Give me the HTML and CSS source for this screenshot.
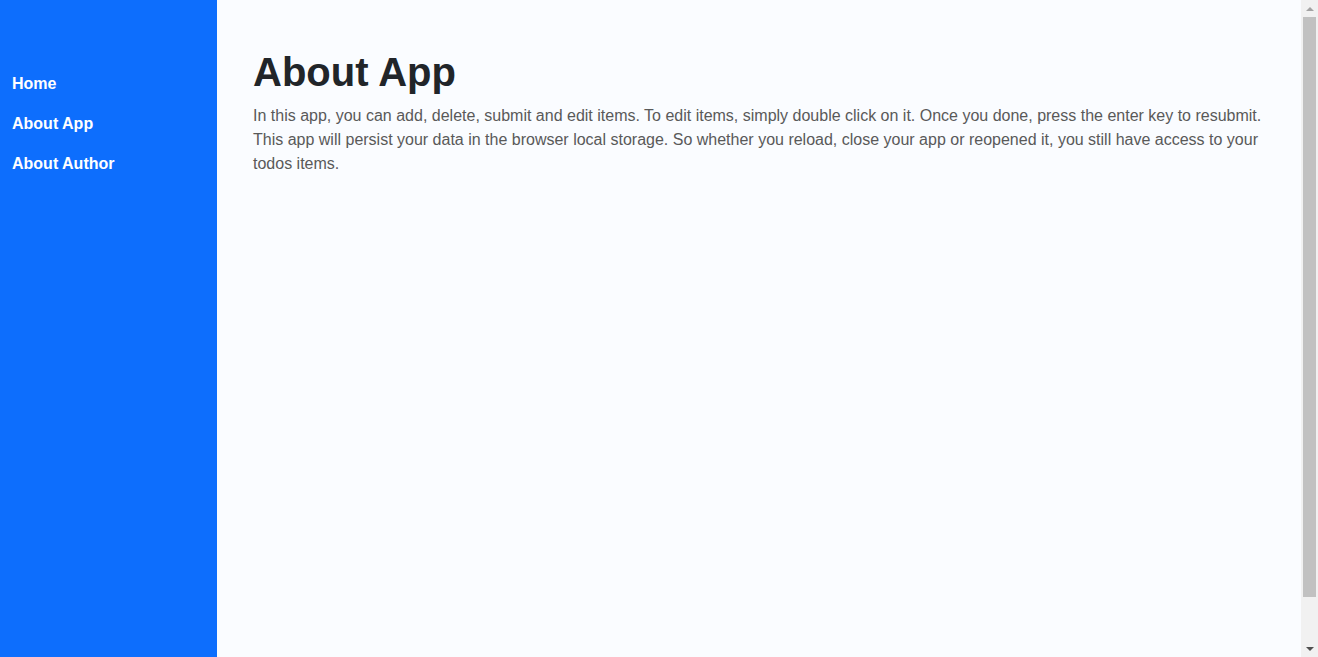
FILE: index.html
```html
<!DOCTYPE html>
<html lang="en">
<head>
<meta charset="utf-8">
<title>About App</title>
<link rel="stylesheet" href="styles.css">
</head>
<body>
<div class="layout">
  <nav class="sidebar">
    <ul class="nav-list">
      <li><a class="nav-link" href="#">Home</a></li>
      <li><a class="nav-link" href="#">About App</a></li>
      <li><a class="nav-link" href="#">About Author</a></li>
    </ul>
  </nav>
  <main class="content">
    <h1 class="title">About App</h1>
    <p class="text">In this app, you can add, delete, submit and edit items. To edit items, simply double click on it. Once you done, press the enter key to resubmit. This app will persist your data in the browser local storage. So whether you reload, close your app or reopened it, you still have access to your todos items.</p>
  </main>
</div>
<div class="scrollbar" aria-hidden="true">
  <div class="sb-btn"><span class="arrow-up"></span></div>
  <div class="sb-track"><div class="sb-thumb"></div></div>
  <div class="sb-btn"><span class="arrow-down"></span></div>
</div>
</body>
</html>
```
FILE: styles.css
```css
* { box-sizing: border-box; }
html, body { margin: 0; padding: 0; }
body {
  font-family: "Liberation Sans", Arial, sans-serif;
  font-size: 16px;
  line-height: 24px;
  background: #fafcff;
  color: #212529;
}
.layout {
  display: flex;
  min-height: 705px;
  padding-right: 17px;
}
.sidebar {
  width: 217px;
  flex: 0 0 217px;
  background: #0d6efd;
  padding-top: 64px;
}
.nav-list {
  list-style: none;
  margin: 0;
  padding: 0;
}
.nav-link {
  display: block;
  padding: 8px 12px;
  color: #fff;
  font-weight: 700;
  text-decoration: none;
}
.content {
  flex: 1;
  padding: 48px 36px 0 36px;
}
.title {
  margin: 0 0 8px 0;
  font-size: 40px;
  line-height: 48px;
  font-weight: 700;
  color: #212529;
}
.text {
  margin: 0;
  color: #595959;
}
.scrollbar {
  position: fixed;
  top: 0;
  right: 0;
  bottom: 0;
  width: 17px;
  background: #f1f1f1;
  display: flex;
  flex-direction: column;
}
.sb-btn {
  height: 17px;
  flex: 0 0 17px;
  display: flex;
  align-items: center;
  justify-content: center;
}
.arrow-up {
  width: 0;
  height: 0;
  border-left: 4px solid transparent;
  border-right: 4px solid transparent;
  border-bottom: 4px solid #a3a3a3;
}
.arrow-down {
  width: 0;
  height: 0;
  border-left: 4px solid transparent;
  border-right: 4px solid transparent;
  border-top: 4px solid #505050;
}
.sb-track {
  flex: 1;
  padding: 0 2px;
}
.sb-thumb {
  height: 580px;
  background: #c1c1c1;
}
```
